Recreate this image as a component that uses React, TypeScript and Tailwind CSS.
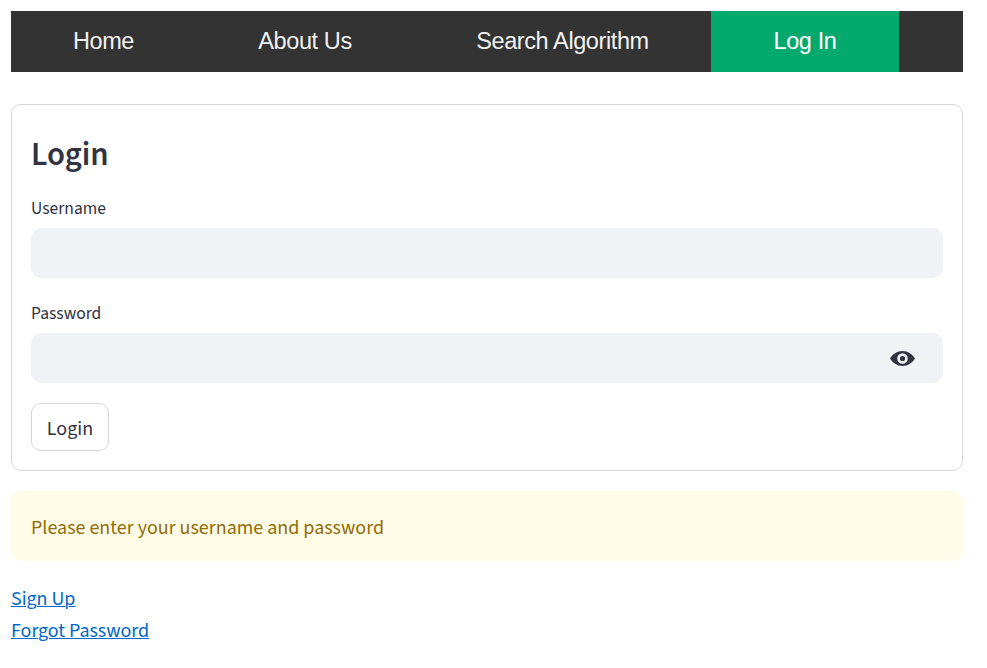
const src = "font-['Source_Sans_Pro','Source_Sans_3','Noto_Sans_CJK_SC',sans-serif]";

function NavItem({ label, active, width }: { label: string; active?: boolean; width: string }) {
  return (
    <a className={`${width} flex h-full items-center justify-center ${active ? "bg-[#04aa6d] text-white" : ""}`}>
      <span className="whitespace-nowrap">{label}</span>
    </a>
  );
}

function Field({ label, secret }: { label: string; secret?: boolean }) {
  return (
    <div>
      <div className="flex h-[30px] items-center pb-[9px] text-[17.5px] leading-none">{label}</div>
      <div className="flex h-[50px] items-center justify-end rounded-[10px] bg-[#f0f2f6] pr-7">
        {secret && (
          <svg className="mt-px" width="25" height="15" viewBox="0 0 25 15" fill="#31333f">
            <path fillRule="evenodd" d="M12.500 0C7.200 0 2.500 3.300 0 7.500C2.500 11.700 7.200 15 12.500 15S22.500 11.700 25 7.500C22.500 3.300 17.800 0 12.500 0ZM12.500 12.800a5.300 5.300 0 1 1 0-10.600a5.300 5.300 0 0 1 0 10.600ZM12.500 4.900a2.600 2.600 0 1 0 0 5.200a2.600 2.600 0 0 0 0-5.200Z" />
          </svg>
        )}
      </div>
    </div>
  );
}

export default function App() {
  return (
    <main className={`h-[668px] w-[987px] overflow-hidden bg-white pt-[11px] pr-6 pl-[11px] text-[#31333f] ${src}`}>
      <nav className="flex h-[61px] bg-[#333] font-['Liberation_Sans',Arial,sans-serif] text-[23.5px] tracking-[-0.4px] text-[#f2f2f2]">
        <NavItem label="Home" width="w-[185px]" />
        <NavItem label="About Us" width="w-[218px]" />
        <NavItem label="Search Algorithm" width="w-[297px]" />
        <NavItem label="Log In" width="w-[188px]" active />
      </nav>
      <section className="mt-8 h-[367px] rounded-[10px] border border-[#d5d6d9] px-[19px] pt-[28px]">
        <h1 className="mb-[21px] h-[44px] text-[32.8px] leading-[43px] font-semibold tracking-[-0.1px]">Login</h1>
        <Field label="Username" />
        <div className="h-[25px]" />
        <Field label="Password" secret />
        <button className="mt-5 flex h-12 w-[78px] items-center justify-center rounded-[10px] border border-[#d5d6d9] pt-[3px] text-[20px]">Login</button>
      </section>
      <div className="mt-5 flex h-[70px] items-center rounded-[10px] bg-[#fffce7] px-5 pt-[4px] text-[20px] text-[#926c05]">Please enter your username and password</div>
      <div className="mt-[22px] flex flex-col items-start text-[20px] leading-8 tracking-[-0.03px] text-[#0068c9] underline decoration-1">
        <a>Sign Up</a>
        <a>Forgot Password</a>
      </div>
    </main>
  );
}
